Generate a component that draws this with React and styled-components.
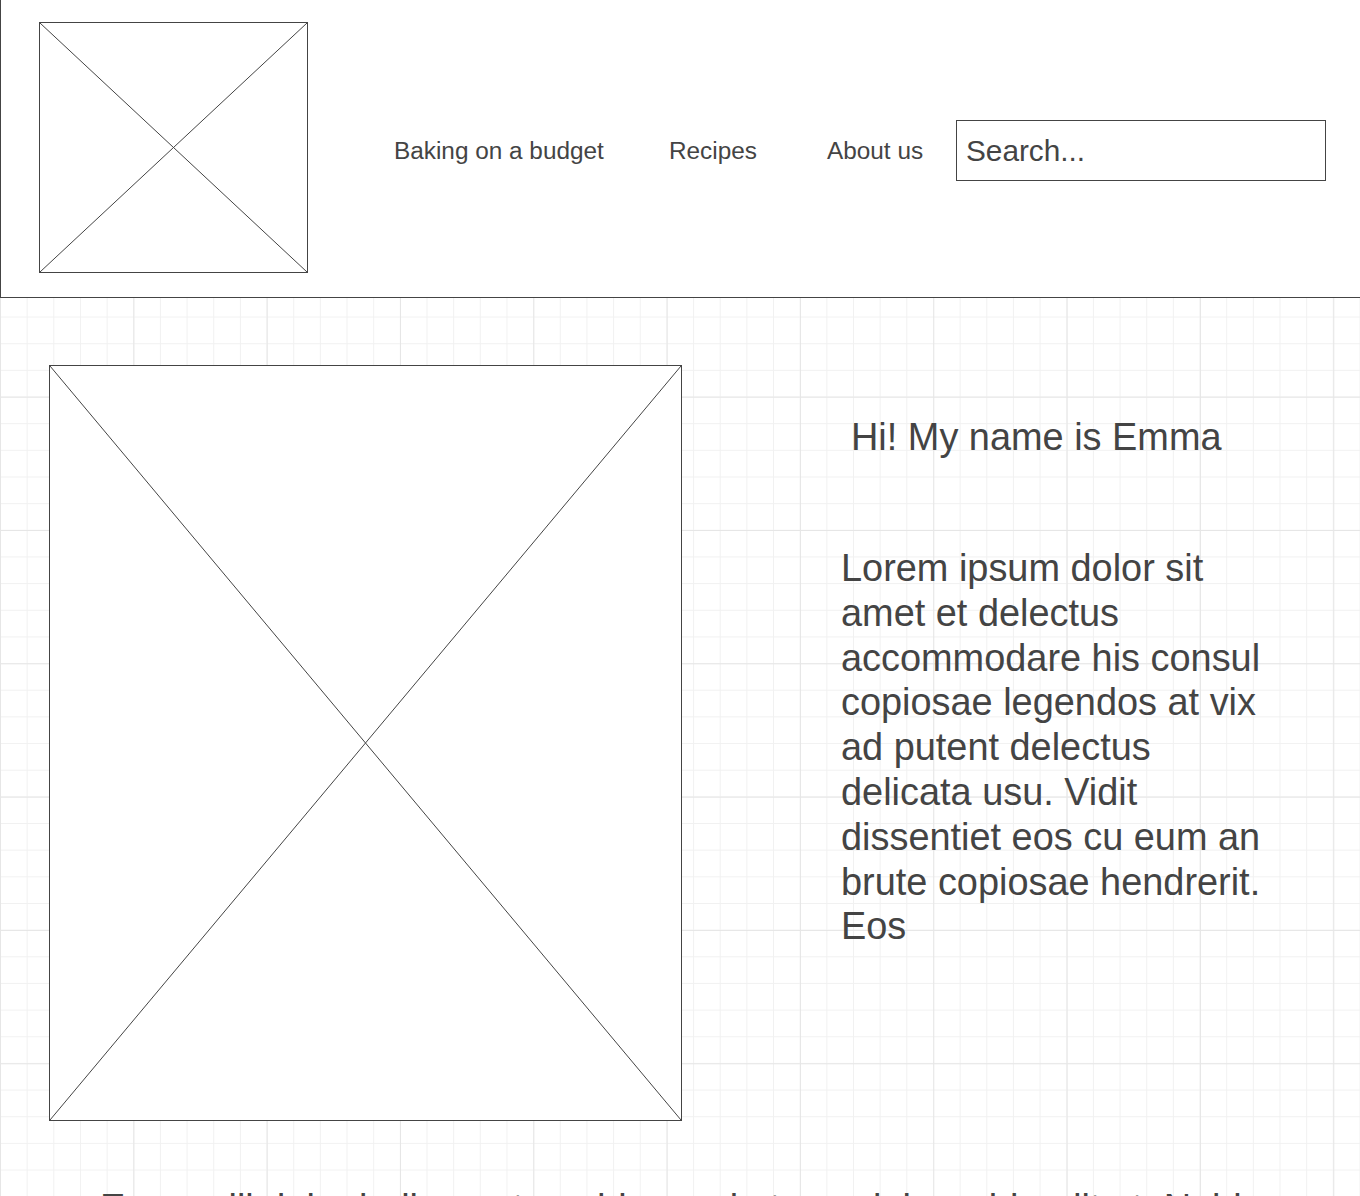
import React from 'react';
import styled, { createGlobalStyle } from 'styled-components';

const GlobalStyle = createGlobalStyle`
    html, body {
        margin: 0;
        padding: 0;
    }
    body {
        font-family: "Liberation Sans", Arial, sans-serif;
        color: #444;
        background-color: #fff;
        background-image:
            linear-gradient(to right, #e6e6e6 1px, transparent 1px),
            linear-gradient(to bottom, #e6e6e6 1px, transparent 1px),
            linear-gradient(to right, #f1f1f1 1px, transparent 1px),
            linear-gradient(to bottom, #f1f1f1 1px, transparent 1px);
        background-size: 133.333px 133.333px, 133.333px 133.333px, 26.667px 26.667px, 26.667px 26.667px;
        background-position: 0 -3.333px;
    }
`;

const Page = styled.div`
    min-height: 1196px;
    overflow: hidden;
`;

const Header = styled.header`
    display: flex;
    align-items: center;
    height: 297px;
    padding-left: 38px;
    background: #fff;
    border-left: 1px solid #444;
    border-bottom: 1px solid #444;
`;

const PlaceholderBox = styled.div`
    position: relative;
    flex: none;
    width: ${props => props.w}px;
    height: ${props => props.h}px;
    margin-top: ${props => props.offset || 0}px;
    background: #fff;
    border: 1px solid #444;
    box-sizing: border-box;

    svg {
        display: block;
        width: 100%;
        height: 100%;
    }
`;

const Placeholder = ({ w, h, offset }) => (
    <PlaceholderBox w={w} h={h} offset={offset}>
        <svg viewBox="0 0 100 100" preserveAspectRatio="none">
            <line x1="0" y1="0" x2="100" y2="100" stroke="#444" strokeWidth="1" vectorEffect="non-scaling-stroke" />
            <line x1="100" y1="0" x2="0" y2="100" stroke="#444" strokeWidth="1" vectorEffect="non-scaling-stroke" />
        </svg>
    </PlaceholderBox>
);

const Nav = styled.nav`
    display: flex;
    align-items: center;
    margin: 4px 0 0 86px;
`;

const NavLink = styled.a`
    display: block;
    width: ${props => props.width}px;
    font-size: 24.35px;
    color: #444;
    text-decoration: none;
    white-space: nowrap;
    cursor: pointer;
`;

const SearchInput = styled.input`
    box-sizing: border-box;
    width: 370px;
    height: 61px;
    margin-left: 32px;
    margin-top: 4px;
    padding: 0 0 0 9px;
    border: 1px solid #444;
    border-radius: 0;
    outline: none;
    background: #fff;
    font-family: "Liberation Sans", Arial, sans-serif;
    font-size: 29.77px;
    color: #444;

    &::placeholder {
        color: #444;
        opacity: 1;
    }
`;

const Main = styled.main`
    display: flex;
    align-items: flex-start;
    padding: 67px 0 0 49px;
`;

const Intro = styled.section`
    display: flex;
    flex-direction: column;
    margin-left: 159px;
    padding-top: 51px;
`;

const Heading = styled.h1`
    margin: 0 0 0 10px;
    font-size: 37.9px;
    font-weight: normal;
    line-height: 43px;
`;

const Paragraph = styled.p`
    width: 440px;
    margin: 87px 0 0;
    font-size: 37.9px;
    line-height: 44.8px;
`;

const MoreText = styled.p`
    margin: 65px 0 0;
    padding: 0 49px 0 100px;
    font-size: 37.9px;
    line-height: 44.8px;
`;

const App = () => (
    <Page>
        <GlobalStyle />
        <Header>
            <Placeholder w={269} h={251} offset={-2} />
            <Nav>
                <NavLink width={275}>Baking on a budget</NavLink>
                <NavLink width={158}>Recipes</NavLink>
                <NavLink width={97}>About us</NavLink>
            </Nav>
            <SearchInput type="text" placeholder="Search..." />
        </Header>
        <Main>
            <Placeholder w={633} h={756} />
            <Intro>
                <Heading>Hi! My name is Emma</Heading>
                <Paragraph>
                    Lorem ipsum dolor sit amet et delectus accommodare his consul copiosae legendos at vix ad
                    putent delectus delicata usu. Vidit dissentiet eos cu eum an brute copiosae hendrerit. Eos
                </Paragraph>
            </Intro>
        </Main>
        <MoreText>
            Ea cu alii dolor bellum, atque hinc mei ut, sea labore blandit ut. Nobis libris dolorum in pro,
            mel ei aeque nullam delenit.
        </MoreText>
    </Page>
);

export default App;
